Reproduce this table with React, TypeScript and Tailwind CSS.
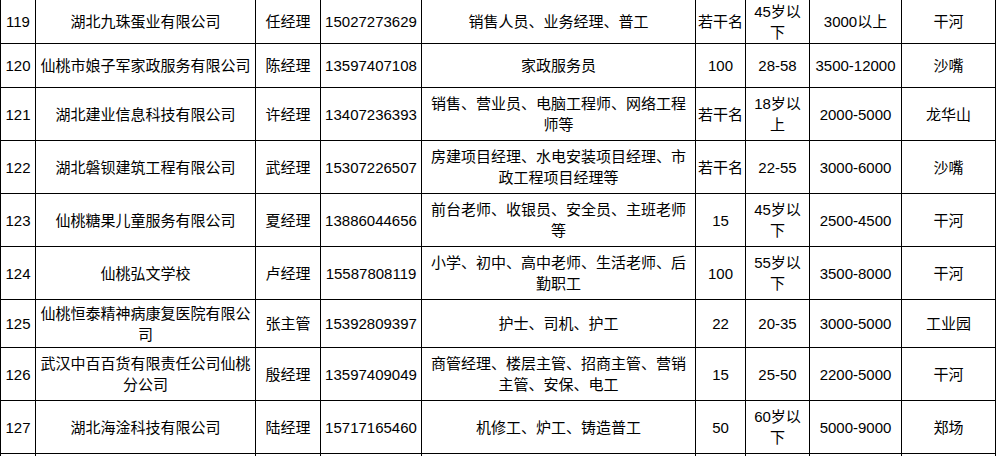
import React from "react";

type Row = {
  h: number;
  cells: string[];
};

const rows: Row[] = [
  { h: 44, cells: ["119", "湖北九珠蛋业有限公司", "任经理", "15027273629", "销售人员、业务经理、普工", "若干名", "45岁以|下", "3000以上", "干河"] },
  { h: 44, cells: ["120", "仙桃市娘子军家政服务有限公司", "陈经理", "13597407108", "家政服务员", "100", "28-58", "3500-12000", "沙嘴"] },
  { h: 53, cells: ["121", "湖北建业信息科技有限公司", "许经理", "13407236393", "销售、营业员、电脑工程师、网络工程|师等", "若干名", "18岁以|上", "2000-5000", "龙华山"] },
  { h: 53, cells: ["122", "湖北磐钡建筑工程有限公司", "武经理", "15307226507", "房建项目经理、水电安装项目经理、市|政工程项目经理等", "若干名", "22-55", "3000-6000", "沙嘴"] },
  { h: 53, cells: ["123", "仙桃糖果儿童服务有限公司", "夏经理", "13886044656", "前台老师、收银员、安全员、主班老师|等", "15", "45岁以|下", "2500-4500", "干河"] },
  { h: 53, cells: ["124", "仙桃弘文学校", "卢经理", "15587808119", "小学、初中、高中老师、生活老师、后|勤职工", "100", "55岁以|下", "3500-8000", "干河"] },
  { h: 48, cells: ["125", "仙桃恒泰精神病康复医院有限公|司", "张主管", "15392809397", "护士、司机、护工", "22", "20-35", "3000-5000", "工业园"] },
  { h: 53, cells: ["126", "武汉中百百货有限责任公司仙桃|分公司", "殷经理", "13597409049", "商管经理、楼层主管、招商主管、营销|主管、安保、电工", "15", "25-50", "2200-5000", "干河"] },
  { h: 53, cells: ["127", "湖北海淦科技有限公司", "陆经理", "15717165460", "机修工、炉工、铸造普工", "50", "60岁以|下", "5000-9000", "郑场"] },
  { h: 40, cells: ["", "", "", "", "", "", "", "", ""] },
];

function Cell({ text }: { text: string }) {
  const parts = text.split("|");
  return (
    <span className="block w-full whitespace-nowrap">
      {parts.map((p, i) => (
        <React.Fragment key={i}>
          {i > 0 && <br />}
          {p}
        </React.Fragment>
      ))}
    </span>
  );
}

export default function App() {
  return (
    <div
      className="w-[998px] h-[456px] overflow-hidden bg-white text-black"
      style={{ fontFamily: '"Liberation Sans", "Noto Sans CJK SC", sans-serif' }}
    >
      <div className="grid grid-cols-[36px_220px_65px_101px_274px_50px_64px_92px_94px] text-[15px] leading-[21px]">
        {rows.map((r, ri) =>
          r.cells.map((c, ci) => (
            <div
              key={`${ri}-${ci}`}
              className={`flex items-center justify-center overflow-visible text-center border-b border-r border-black ${ci === 0 ? "border-l" : ""} ${
                r.h === 44
                  ? "h-[44px]"
                  : r.h === 53
                  ? "h-[53px]"
                  : r.h === 48
                  ? "h-[48px]"
                  : "h-[40px]"
              }`}
            >
              <Cell text={c} />
            </div>
          ))
        )}
      </div>
    </div>
  );
}
